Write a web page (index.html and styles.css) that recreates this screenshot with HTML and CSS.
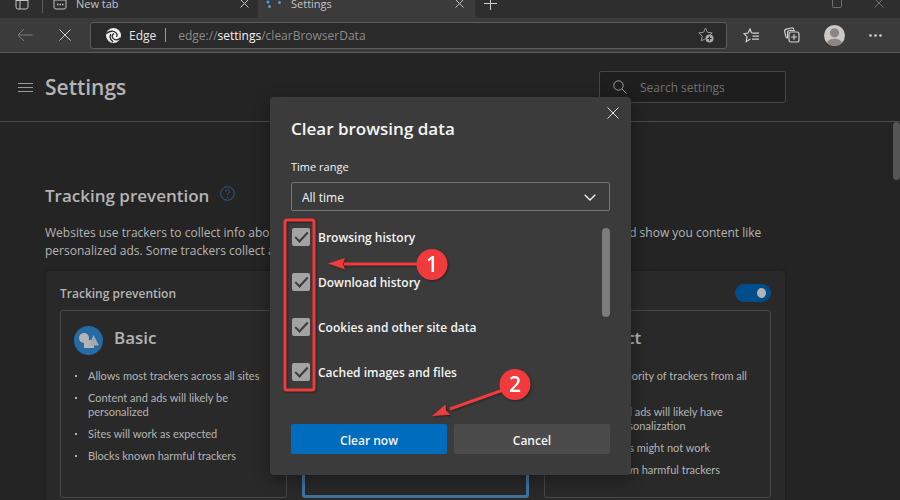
FILE: index.html
```html
<!DOCTYPE html>
<html lang="en">
<head>
<meta charset="utf-8">
<title>Settings</title>
<link rel="stylesheet" href="styles.css">
</head>
<body>
<header class="browser">
  <div class="tabs">
    <div class="tabs-left">
      <button class="icon-btn tab-menu" aria-label="Tab actions">
        <svg width="14" height="14" viewBox="0 0 14 14"><rect x="1" y="1" width="12" height="12" rx="2"/><path d="M1 4.500h12M5 4.500v8.500"/></svg>
      </button>
      <div class="tab">
        <svg width="14" height="14" viewBox="0 0 14 14"><rect x="1" y="1" width="12" height="12" rx="2"/><path d="M1 4h12"/><path d="M4 8.500h1.500M6.500 8.500h1.500M9 8.500h1.500" stroke-width="1.500"/></svg>
        <span>New tab</span>
        <button class="icon-btn" aria-label="Close New tab"><svg width="9" height="9" viewBox="0 0 9 9"><path d="M.5.5l8 8M8.500.5l-8 8"/></svg></button>
      </div>
    </div>
    <div class="tab tab-active">
      <svg class="spinner" width="18" height="16" viewBox="0 0 18 16"><circle cx="4" cy="7" r="1.500"/><circle cx="5.500" cy="11.500" r="1.500"/><circle cx="15.500" cy="7.500" r="1.500"/></svg>
      <span>Settings</span>
      <button class="icon-btn" aria-label="Close Settings"><svg width="9" height="9" viewBox="0 0 9 9"><path d="M.5.5l8 8M8.500.5l-8 8"/></svg></button>
    </div>
    <div class="tabs-right">
      <button class="icon-btn new-tab" aria-label="New tab"><svg width="13" height="13" viewBox="0 0 13 13"><path d="M6.500 0v13M0 6.500h13"/></svg></button>
      <div class="window-btns">
        <button class="icon-btn" aria-label="Maximize"><svg width="10" height="10" viewBox="0 0 10 10"><rect x=".5" y=".5" width="9" height="9" rx="1"/></svg></button>
        <button class="icon-btn" aria-label="Close window"><svg width="10" height="10" viewBox="0 0 10 10"><path d="M.5.5l9 9M9.500.5l-9 9"/></svg></button>
      </div>
    </div>
  </div>
  <div class="toolbar">
    <button class="icon-btn back" aria-label="Back"><svg width="16" height="14" viewBox="0 0 16 14"><path d="M15.500 7H1M7 1L1 7l6 6"/></svg></button>
    <button class="icon-btn stop" aria-label="Stop loading"><svg width="12" height="12" viewBox="0 0 12 12"><path d="M.5.5l11 11M11.500.5l-11 11"/></svg></button>
    <div class="address">
      <svg class="edge" width="15" height="15" viewBox="0 0 14 14"><circle cx="7" cy="7" r="7"/><path d="M.3 5.500C3 2.500 7 2.300 9.200 4.400M13.600 9c-2 2.400-5.200 2.800-7.200.4C5.200 8 5.800 5.800 7.600 5.300M4.600 5.700c-1.400 2.300-.6 5.300 2.200 7.300M9.200 4.400c1.600 1.200 1.500 2.900.4 3.800"/></svg>
      <span class="site">Edge</span>
      <span class="divider"></span>
      <span class="url">edge://<b>settings</b>/clearBrowserData</span>
      <button class="icon-btn favorite" aria-label="Add to favorites"><svg width="17" height="16" viewBox="0 0 17 16"><path d="M7.500 1l2 4.300 4.700.6-3.400 3.200M7.500 1l-2 4.300-4.700.6 3.400 3.200-.9 4.800 3.600-2"/><circle class="dot" cx="11.500" cy="11.500" r="4"/><path class="plus" d="M11.500 9.300v4.400M9.300 11.500h4.400"/></svg></button>
    </div>
    <button class="icon-btn" aria-label="Favorites"><svg width="17" height="15" viewBox="0 0 17 15"><path stroke-width="1.200" d="M10.200 5L8.500 4.800 7 1 5 5 1 5.600l3 3-.8 4.900L7.500 11M9.500 5.200H16M9.500 8.200H16M9 11.200h7"/></svg></button>
    <button class="icon-btn" aria-label="Collections"><svg width="16" height="16" viewBox="0 0 16 16"><path stroke-width="1.200" d="M3.500 11.500C2 11 1.800 10 1.500 8.500L.7 4.500c-.3-1.300.3-2 1.500-2.300L7.500 1c1.300-.3 2 .3 2.400 1.500"/><rect stroke-width="1.200" x="5" y="5" width="10" height="10" rx="2"/><path stroke-width="1.200" d="M10 7.200v5.600M7.200 10h5.600M3.500 11V6c0-1.700.8-2.500 2.500-2.500h5"/></svg></button>
    <button class="icon-btn" aria-label="Profile"><svg class="avatar" width="21" height="21" viewBox="0 0 21 21"><defs><clipPath id="face"><circle cx="10.500" cy="10.500" r="10.500"/></clipPath></defs><circle cx="10.500" cy="10.500" r="10.500"/><g clip-path="url(#face)"><circle class="shade" cx="10.500" cy="7.800" r="4.600"/><ellipse class="shade" cx="10.500" cy="18.500" rx="7.500" ry="4.800"/></g></svg></button>
    <button class="icon-btn" aria-label="Settings and more"><svg class="dots" width="13" height="3" viewBox="0 0 13 3"><circle cx="1.500" cy="1.500" r="1.300"/><circle cx="6.500" cy="1.500" r="1.300"/><circle cx="11.500" cy="1.500" r="1.300"/></svg></button>
  </div>
</header>

<div class="page">
  <div class="page-head">
    <button class="icon-btn" aria-label="Menu"><svg width="15" height="9" viewBox="0 0 15 9"><path d="M0 .5h15M0 4.500h15M0 8.500h15"/></svg></button>
    <h1>Settings</h1>
    <label class="search">
      <svg width="14" height="14" viewBox="0 0 14 14"><circle cx="5.500" cy="5.500" r="4.700"/><path d="M9 9l4.500 4.500"/></svg>
      <input type="search" placeholder="Search settings" aria-label="Search settings">
    </label>
  </div>

  <main class="content">
    <div class="title-row">
      <h2>Tracking prevention</h2>
      <a class="help" href="#help" aria-label="Help"><svg width="15" height="15" viewBox="0 0 15 15"><circle cx="7.500" cy="7.500" r="6.800"/><path d="M5.500 5.800c0-2.700 4-2.500 4-.1 0 1.600-2 1.600-2 3.200M7.500 10.300v1.300"/></svg></a>
    </div>
    <p class="intro">Websites use trackers to collect info about your browsing. Websites may use this info to improve sites and show you content like personalized ads. Some trackers collect and send your info to sites you haven't visited.</p>

    <section class="panel">
      <div class="panel-head">
        <label for="tracking">Tracking prevention</label>
        <input class="switch" id="tracking" type="checkbox" checked>
      </div>
      <div class="levels">
        <article class="level">
          <h3><svg width="29" height="29" viewBox="0 0 29 29"><circle class="disc" cx="14.500" cy="14.500" r="14.500"/><circle class="shape" cx="10" cy="12" r="5"/><path class="shape" d="M10 14h10v8H10z"/><path class="cone" d="M19.500 9l5.500 10.500H15z"/></svg><span>Basic</span></h3>
          <ul>
            <li>Allows most trackers across all sites</li>
            <li>Content and ads will likely be personalized</li>
            <li>Sites will work as expected</li>
            <li>Blocks known harmful trackers</li>
          </ul>
        </article>
        <article class="level level-selected">
          <h3>Balanced</h3>
          <ul>
            <li>Blocks trackers from sites you haven't visited</li>
            <li>Sites will work as expected</li>
            <li>Blocks known harmful trackers</li>
          </ul>
        </article>
        <article class="level">
          <h3><svg width="29" height="29" viewBox="0 0 29 29"><circle class="disc" cx="14.500" cy="14.500" r="14.500"/></svg><span>Strict</span></h3>
          <ul>
            <li>Blocks a majority of trackers from all sites</li>
            <li>Content and ads will likely have minimal personalization</li>
            <li>Parts of sites might not work</li>
            <li>Blocks known harmful trackers</li>
          </ul>
        </article>
      </div>
    </section>
  </main>
  <div class="page-thumb"></div>
</div>

<div class="dialog" role="dialog" aria-labelledby="dialog-title">
  <button class="icon-btn dialog-close" aria-label="Close"><svg width="12" height="12" viewBox="0 0 12 12"><path d="M.5.5l11 11M11.500.5l-11 11"/></svg></button>
  <h2 id="dialog-title">Clear browsing data</h2>
  <label class="range-label" for="range">Time range</label>
  <div class="range">
    <select id="range"><option>All time</option></select>
    <svg width="12" height="7" viewBox="0 0 12 7"><path d="M.7.7L6 6 11.300.7"/></svg>
  </div>
  <div class="choices">
    <div class="choice-list">
      <label><input type="checkbox" checked>Browsing history</label>
      <label><input type="checkbox" checked>Download history</label>
      <label><input type="checkbox" checked>Cookies and other site data</label>
      <label><input type="checkbox" checked>Cached images and files</label>
    </div>
    <div class="choice-thumb"></div>
  </div>
  <div class="actions">
    <button class="primary">Clear now</button>
    <button>Cancel</button>
  </div>
  <svg class="notes" width="361" height="378" viewBox="0 0 361 378">
    <rect x="15" y="123" width="29" height="170" rx="2"/>
    <path d="M74 167H148M180 312L236 292"/>
    <path class="head" d="M58 166.500L75 161l-2 6 2 5.500zM162 319l13.500-11.500.5 6 4.500 4.200z"/>
    <circle cx="162" cy="167.500" r="15.500"/>
    <circle cx="245" cy="287.500" r="15.500"/>
    <text x="162" y="175">1</text>
    <text x="245" y="295">2</text>
  </svg>
</div>
</body>
</html>
```
FILE: styles.css
```css
* { box-sizing: border-box; }

body {
  margin: 0;
  height: 100vh;
  overflow: hidden;
  display: flex;
  flex-direction: column;
  background: #242424;
  color: #b4b4b4;
  font-family: "Open Sans", "Noto Sans", sans-serif;
  font-size: 12px;
}

h1, h2, h3, p, ul { margin: 0; padding: 0; }
h1, h2, h3 { font-weight: 600; }

svg {
  flex: none;
  display: block;
  fill: none;
  stroke: currentColor;
}

button, input, select { font: inherit; color: inherit; }

.icon-btn {
  flex: none;
  display: flex;
  align-items: center;
  justify-content: center;
  padding: 0;
  border: 0;
  background: none;
}

/* Browser chrome */
.browser {
  flex: none;
  background: #3b3b3b;
  border-bottom: 1px solid #5c5c5c;
  color: #cfcfcf;
}

.tabs {
  display: flex;
  height: 30px;
  margin-top: -12px;
  font-size: 11px;
  color: #c4c4c4;
}

.tabs-left, .tabs-right {
  display: flex;
  background: #2e2e2e;
}

.tabs-left { border-radius: 0 0 4px 0; padding-left: 15px; }
.tabs-right { flex: 1; border-radius: 0 0 0 4px; padding-left: 9px; }

.tab-menu { width: 28px; justify-content: flex-start; position: relative; }
.tab-menu::after {
  content: "";
  position: absolute;
  right: 0;
  top: 8px;
  height: 17px;
  border-right: 1px solid #5c5c5c;
}

.tab {
  display: flex;
  align-items: center;
  gap: 9px;
  width: 215px;
  padding: 0 9px 0 10px;
}

.tab span { flex: 1; }
.tab-active { width: 217px; padding-right: 11px; padding-left: 6px; }
.spinner { fill: #4f9fd8; stroke: none; }
.window-btns { display: flex; gap: 32px; margin-left: auto; padding-right: 16px; color: #707070; }
.new-tab { color: #cfcfcf; }

.toolbar {
  display: flex;
  align-items: center;
  gap: 24px;
  height: 34px;
  padding: 0 18px 0 17px;
}

.back { color: #7c7c7c; }
.stop { width: 16px; }

.address {
  flex: 1;
  display: flex;
  align-items: center;
  gap: 8px;
  height: 27px;
  margin: 0 -8px 0 -7px;
  padding: 0 11px 0 15px;
  border: 1px solid #5c5c5c;
  border-radius: 3px;
  background: #2a2a2a;
}

.edge { fill: #f0f0f0; stroke: #2a2a2a; stroke-width: 1.2; }
.edge circle { stroke: none; }
.site { color: #e6e6e6; }
.divider { height: 14px; margin-left: 1px; border-left: 1px solid #9a9a9a; }
.url { color: #8a8a8a; flex: 1; margin-left: 4px; }
.url b { font-weight: 400; color: #f4f4f4; }
.favorite { color: #9a9a9a; }
.favorite .dot { fill: #a8a8a8; stroke: none; }
.favorite .plus { stroke: #2a2a2a; }
.avatar { fill: #cbc8c5; stroke: none; }
.avatar .shade { fill: #8b8684; }
.dots { fill: #d4d4d4; stroke: none; }

/* Settings page */
.page {
  flex: 1;
  min-height: 0;
  overflow: hidden;
  position: relative;
}

.page-head {
  display: flex;
  align-items: center;
  gap: 12px;
  height: 69px;
  padding: 0 114px 0 18px;
  border-bottom: 1px solid #4a4a4a;
  color: #9a9a9a;
}

.page-head h1 { font-size: 21px; line-height: 28px; color: #b4b4b4; }

.search {
  display: flex;
  align-items: center;
  gap: 13px;
  width: 187px;
  height: 32px;
  margin-left: auto;
  padding: 0 13px;
  border: 1px solid #454545;
  border-radius: 2px;
  background: #1e1e1e;
  color: #a0a0a0;
}

.search input {
  flex: 1;
  min-width: 0;
  padding: 0;
  border: 0;
  outline: 0;
  background: none;
}

.search input::placeholder { color: #707070; }

.content { padding: 59px 115px 0 45px; }

.title-row { display: flex; align-items: center; gap: 11px; height: 28px; }
.title-row h2 { font-size: 17px; }
.help { color: #2c5f8c; padding-bottom: 4px; }
.intro { margin-top: 15px; line-height: 18px; }

.panel {
  margin: 11px 0 0 1px;
  padding: 8px 14px 14px;
  border-radius: 4px;
  background: #292929;
  box-shadow: 0 0 3px #1a1a1a;
}

.panel-head {
  display: flex;
  align-items: center;
  justify-content: space-between;
  height: 28px;
  font-weight: 600;
}

.switch {
  appearance: none;
  width: 36px;
  height: 18px;
  margin: 0;
  padding: 4px 5px;
  border-radius: 9px;
  background: #004d8c;
  display: flex;
  justify-content: flex-end;
}

.switch::before { content: ""; width: 9px; height: 10px; border-radius: 50%; background: #b4b4b4; }

.levels {
  display: grid;
  grid-template-columns: repeat(3, 1fr);
  gap: 15px;
  margin-top: 3px;
}

.level {
  min-height: 188px;
  padding: 14px 13px;
  border: 1px solid #484848;
  border-radius: 3px;
}

.level-selected { border: 3px solid #41729c; }

.level h3 {
  display: flex;
  align-items: center;
  gap: 11px;
  height: 30px;
  font-size: 17px;
}

.level h3 span { line-height: 24px; padding-bottom: 4px; }

.disc { fill: #266ba3; stroke: none; }
.shape { fill: #b4b4b4; stroke: none; }
.cone { fill: #a4a8ac; stroke: none; }

.level ul {
  display: flex;
  flex-direction: column;
  gap: 8px;
  margin-top: 14px;
  padding-left: 14px;
  list-style: none;
  font-family: Lato, "Open Sans", sans-serif;
  font-size: 11px;
  line-height: 14px;
}

.level li { position: relative; }
.level li::before {
  content: "";
  position: absolute;
  left: -13px;
  top: 6px;
  width: 2px;
  height: 2px;
  background: #b4b4b4;
}

.page-thumb {
  position: absolute;
  right: 0;
  top: 69px;
  width: 7px;
  height: 58px;
  border-radius: 4px;
  background: #555;
}

/* Clear browsing data dialog */
.dialog {
  position: absolute;
  top: 97px;
  left: 50%;
  width: 361px;
  margin-left: -180px;
  padding: 18px 21px 21px;
  border-radius: 4px;
  background: #3b3b3b;
  box-shadow: 0 4px 16px rgba(0, 0, 0, .4);
  color: #f4f4f4;
}

.dialog h2 { font-size: 17px; line-height: 28px; }

.dialog-close { position: absolute; top: 10px; right: 12px; color: #e0e0e0; }

.range-label { display: block; margin-top: 16px; font-size: 11px; line-height: 16px; }

.range { position: relative; margin-top: 7px; }

.range select {
  appearance: none;
  display: block;
  width: 100%;
  height: 29px;
  padding: 2px 10px 0;
  border: 1px solid #757575;
  border-radius: 2px;
  background: transparent;
}

.range svg { position: absolute; right: 14px; top: 12px; pointer-events: none; stroke-width: 1.3; }

.choices { display: flex; justify-content: space-between; margin-top: 17px; }

.choice-list { display: flex; flex-direction: column; gap: 27px; }

.choice-list label {
  display: flex;
  align-items: center;
  gap: 8px;
  height: 18px;
  padding-left: 1px;
  font-weight: 600;
}

.choice-list input {
  appearance: none;
  width: 18px;
  height: 18px;
  margin: 0;
  border-radius: 2px;
  background: #a3a3a3;
  display: flex;
  align-items: center;
  justify-content: center;
}

.choice-list input::before {
  content: "";
  width: 11px;
  height: 5px;
  border-left: 2px solid #3b3b3b;
  border-bottom: 2px solid #3b3b3b;
  transform: translateY(-2px) rotate(-47deg);
}

.choice-thumb { width: 8px; height: 89px; border-radius: 4px; background: #7c7c7c; }

.actions {
  display: grid;
  grid-template-columns: 1fr 1fr;
  gap: 7px;
  margin-top: 43px;
}

.actions button {
  height: 30px;
  padding: 2px 0 0;
  border: 0;
  border-radius: 2px;
  background: #4b4b4b;
  font-weight: 600;
}

.actions .primary { background: #006cbe; }

.notes {
  position: absolute;
  left: 0;
  top: 0;
  pointer-events: none;
  stroke: #f13a3c;
  stroke-width: 3;
  filter: drop-shadow(1px 1px 1px rgba(0, 0, 0, .4));
}

.notes .head, .notes circle { fill: #f13a3c; stroke: none; }

.notes text {
  fill: #fff;
  stroke: none;
  font-size: 21px;
  font-weight: 600;
  text-anchor: middle;
}
```
